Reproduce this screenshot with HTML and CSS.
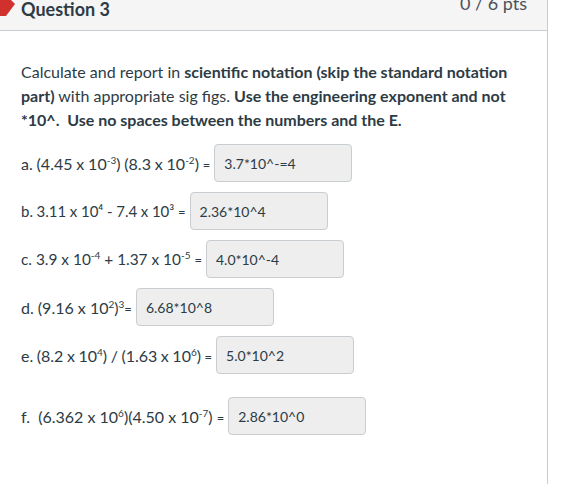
FILE: index.html
```html
<!DOCTYPE html>
<html>
<head>
<meta charset="utf-8">
<link rel="stylesheet" href="styles.css">
</head>
<body>
<div class="question">
  <div class="q-header">
    <svg class="flag" width="16" height="17" viewBox="0 0 16 17"><polygon points="0,0 11,0 15,4 6,16 0,16" fill="#d0312d"/></svg>
    <span class="q-title">Question 3</span>
    <span class="q-pts">0 / 6 pts</span>
  </div>
  <div class="q-body">
    <p class="prompt">Calculate and report in <b>scientific notation (skip the standard notation part)</b> with appropriate sig figs. <b>Use the engineering exponent and not *10^.&nbsp; Use no spaces between the numbers and the E.</b></p>
    <div class="items">
      <div class="item item-a"><span class="label">a. (4.45 x 10<sup>-3</sup>) (8.3 x 10<sup>-2</sup>) <span class="eq">=</span></span><span class="answer">3.7*10^-=4</span></div>
      <div class="item item-b"><span class="label">b. 3.11 x 10⁴ - 7.4 x 10³ <span class="eq">=</span></span><span class="answer">2.36*10^4</span></div>
      <div class="item item-c"><span class="label">c. 3.9 x 10<sup>-4</sup> + 1.37 x 10<sup>-5</sup> <span class="eq">=</span></span><span class="answer">4.0*10^-4</span></div>
      <div class="item item-d"><span class="label">d. (9.16 x 10<sup>2</sup>)<sup>3</sup><span class="eq">=</span></span><span class="answer">6.68*10^8</span></div>
      <div class="item item-e"><span class="label">e. (8.2 x 10<sup>4</sup>) / (1.63 x 10<sup>6</sup>) <span class="eq">=</span></span><span class="answer">5.0*10^2</span></div>
      <div class="item item-f"><span class="label">f.&nbsp; (6.362 x 10<sup>6</sup>)(4.50 x 10<sup>-7</sup>) <span class="eq">=</span></span><span class="answer">2.86*10^0</span></div>
    </div>
  </div>
</div>
</body>
</html>
```

FILE: styles.css
```css
html, body {
  margin: 0;
  padding: 0;
  background: #ffffff;
}
body {
  font-family: Lato, "Open Sans", sans-serif;
  color: #2d3b45;
  width: 573px;
  height: 484px;
  overflow: hidden;
}
.question {
  width: 548px;
  height: 484px;
  border-right: 1px solid #c7cdd1;
  box-sizing: border-box;
}
.q-header {
  position: relative;
  height: 31px;
  box-sizing: border-box;
  background: #f5f5f5;
  border-bottom: 1px solid #c7cdd1;
  display: flex;
  align-items: flex-start;
  padding: 0 20px 0 21px;
}
.flag {
  position: absolute;
  left: 0;
  top: 0;
}
.q-title {
  font-weight: 700;
  font-size: 18px;
  line-height: 18px;
  margin-top: 0;
  color: #2d3b45;
}
.q-pts {
  margin-left: auto;
  font-size: 18px;
  line-height: 18px;
  margin-top: -6px;
  color: #4d5259;
}
.q-body {
  padding: 29px 21px 0 21px;
}
.prompt {
  margin: 0;
  font-size: 16px;
  line-height: 24px;
}
.prompt b {
  font-weight: 700;
}
.items {
  display: flex;
  flex-direction: column;
  gap: 10px;
  margin-top: 12px;
}
.item {
  display: flex;
  align-items: center;
  height: 38px;
  font-size: 16px;
}
.item-a .label {
  word-spacing: -0.25px;
}
.item-b .label {
  font-size: 15px;
  word-spacing: -0.2px;
}
.item-c .label {
  font-size: 15.4px;
  word-spacing: 0;
}
.item-e .label {
  word-spacing: -0.55px;
}
.item-f {
  margin-top: 13px;
}
.label {
  white-space: nowrap;
}
.label sup {
  font-size: 10px;
  line-height: 0;
  vertical-align: 6px;
}
.eq {
  font-size: 13px;
}
.answer {
  margin-left: 4px;
  width: 138px;
  height: 38px;
  box-sizing: border-box;
  background: #eeeeee;
  border: 1px solid #c7cdd1;
  border-radius: 4px;
  padding: 0 0 0 9px;
  display: flex;
  align-items: center;
  font-size: 14px;
  color: #2d3b45;
}
```
